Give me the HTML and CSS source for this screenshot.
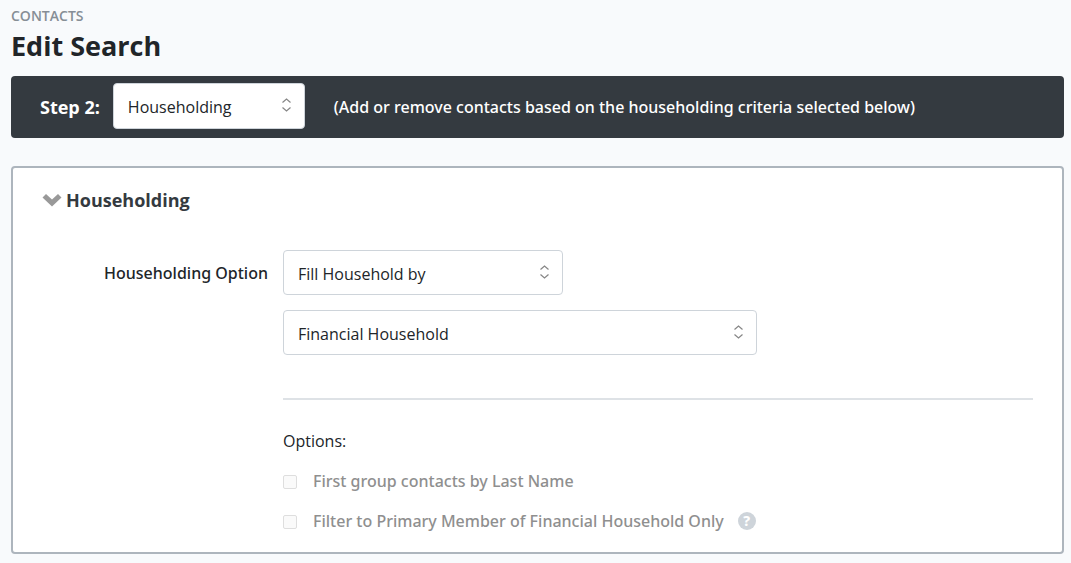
FILE: index.html
```html
<!DOCTYPE html>
<html lang="en">
<head>
    <meta charset="UTF-8">
    <meta name="viewport" content="width=device-width, initial-scale=1.0">
    <title>Edit Search</title>
    <link rel="stylesheet" href="styles.css">
</head>
<body>
    <header class="page-header">
        <div class="breadcrumb">CONTACTS</div>
        <h1>Edit Search</h1>
    </header>

    <div class="step-bar">
        <label class="step-label" for="step">Step 2:</label>
        <div class="select-wrap step-select">
            <select id="step">
                <option>Householding</option>
            </select>
            <svg class="select-arrows" viewBox="0 0 10 14" aria-hidden="true"><path d="M1.500 4.500L5.500 1l4 3.500M1.500 9.500L5.500 13l4-3.500"/></svg>
        </div>
        <span class="step-hint">(Add or remove contacts based on the householding criteria selected below)</span>
    </div>

    <section class="panel">
        <h2 class="panel-title">
            <svg class="chevron" viewBox="0 0 20 13" aria-hidden="true"><path d="M0.500 3.500L4 0L10 5.500L16 0L19.500 3.500L10 12.500Z"/></svg>
            Householding
        </h2>

        <div class="form-row">
            <label class="form-label" for="option">Householding Option</label>
            <div class="fields">
                <div class="select-wrap select-medium">
                    <select id="option">
                        <option>Fill Household by</option>
                    </select>
                    <svg class="select-arrows" viewBox="0 0 10 14" aria-hidden="true"><path d="M1.500 4.500L5.500 1l4 3.500M1.500 9.500L5.500 13l4-3.500"/></svg>
                </div>
                <div class="select-wrap select-large">
                    <select aria-label="Household type">
                        <option>Financial Household</option>
                    </select>
                    <svg class="select-arrows" viewBox="0 0 10 14" aria-hidden="true"><path d="M1.500 4.500L5.500 1l4 3.500M1.500 9.500L5.500 13l4-3.500"/></svg>
                </div>

                <hr>

                <div class="options-title">Options:</div>
                <div class="check-row">
                    <input type="checkbox" id="group-name" disabled>
                    <label for="group-name">First group contacts by Last Name</label>
                </div>
                <div class="check-row">
                    <input type="checkbox" id="primary-only" disabled>
                    <label for="primary-only">Filter to Primary Member of Financial Household Only</label>
                    <button class="help" type="button" aria-label="Help">?</button>
                </div>
            </div>
        </div>
    </section>
</body>
</html>
```
FILE: styles.css
```css
* {
    box-sizing: border-box;
}
body {
    margin: 0;
    padding: 6px 7px 9px 11px;
    background-color: #f8fafc;
    color: #212529;
    font-family: 'Segoe UI', 'Open Sans', 'Noto Sans', sans-serif;
    font-size: 16px;
    line-height: 20px;
}
.breadcrumb {
    color: #868e96;
    font-size: 14px;
    font-weight: 600;
}
h1 {
    margin: 0 0 10px;
    font-size: 27px;
    line-height: 40px;
    font-weight: 700;
}
.step-bar {
    display: flex;
    align-items: center;
    min-height: 62px;
    padding: 7px 29px 9px;
    border-radius: 4px;
    background-color: #343a40;
    color: #fff;
}
.step-label {
    margin-right: 13px;
    padding-top: 2px;
    font-size: 18px;
    font-weight: 700;
}
.step-hint {
    margin-left: 29px;
    padding-top: 2px;
    font-family: 'Segoe UI', 'Noto Sans', sans-serif;
    font-weight: 500;
}
.select-wrap {
    position: relative;
    max-width: 100%;
}
.select-wrap select {
    appearance: none;
    display: block;
    width: 100%;
    height: 45px;
    padding: 2px 40px 0 14px;
    border: 1px solid #ced4da;
    border-radius: 4px;
    background-color: #fff;
    color: #212529;
    font-family: inherit;
    font-size: 16px;
    font-weight: 400;
}
.select-arrows {
    position: absolute;
    top: 15px;
    right: 14px;
    width: 10px;
    height: 14px;
    fill: none;
    stroke: #868686;
    stroke-width: 1.2;
}
.step-bar .step-select {
    width: 192px;
}
.step-bar select {
    height: 46px;
}
.select-medium {
    width: 280px;
    margin-bottom: 15px;
}
.select-large {
    width: 474px;
}
.panel {
    margin-top: 28px;
    padding: 20px 29px 11px;
    border: 2px solid #adb5bd;
    border-radius: 4px;
    background-color: #fff;
}
.panel-title {
    display: flex;
    align-items: center;
    gap: 4px;
    margin: 0 0 38px;
    color: #343a40;
    font-size: 18px;
    line-height: 24px;
    font-weight: 700;
}
.chevron {
    width: 20px;
    height: 13px;
    fill: #999;
}
.form-row {
    display: grid;
    grid-template-columns: 226px 1fr;
    column-gap: 15px;
}
.form-label {
    padding-top: 13px;
    text-align: right;
    font-family: 'Segoe UI', 'Noto Sans', sans-serif;
    font-weight: 500;
}
hr {
    margin: 43px 0 31px;
    border: 0;
    border-top: 2px solid #dee2e6;
}
.options-title {
    margin-bottom: 10px;
    font-weight: 400;
}
.check-row {
    display: flex;
    align-items: center;
    height: 40px;
    color: #8f8f8f;
    font-family: 'Segoe UI', 'Noto Sans', sans-serif;
    font-weight: 500;
}
.check-row input {
    appearance: none;
    width: 14px;
    height: 14px;
    margin: 2px 16px 0 0;
    border: 1px solid #dedede;
    border-radius: 2px;
    background-color: #fafafa;
}
.help {
    width: 18px;
    height: 18px;
    margin-left: 14px;
    padding: 0;
    border: 0;
    border-radius: 50%;
    background-color: #ced4da;
    color: #fff;
    font-family: inherit;
    font-size: 14px;
    line-height: 18px;
    font-weight: 800;
}
```
